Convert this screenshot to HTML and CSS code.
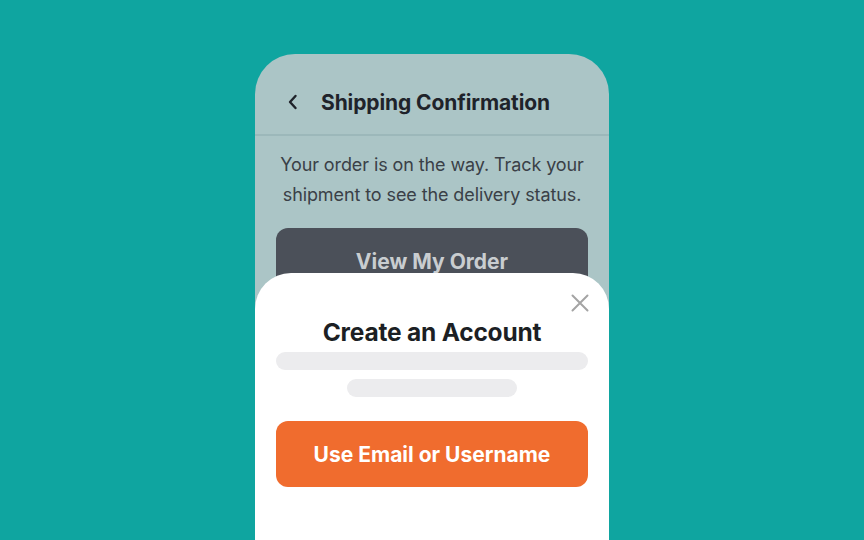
FILE: index.html
```html
<!DOCTYPE html>
<html lang="en">
<head>
    <meta charset="UTF-8">
    <meta name="viewport" content="width=device-width, initial-scale=1.0">
    <title>Shipping Confirmation</title>
    <link rel="stylesheet" href="styles.css">
</head>
<body>
    <div class="phone">
        <header class="header">
            <button class="back" aria-label="Back">
                <svg width="12" height="16" viewBox="0 0 12 16" fill="none">
                    <path d="M8.5 2 L3 8 L8.5 14" stroke="#1f232a" stroke-width="2.4" stroke-linecap="round" stroke-linejoin="round"/>
                </svg>
            </button>
            <h1>Shipping Confirmation</h1>
        </header>

        <div class="content">
            <p class="message">Your order is on the way. Track your shipment to see the delivery status.</p>
            <button class="btn btn-dark">View My Order</button>
        </div>

        <!-- Bottom sheet -->
        <div class="sheet">
            <button class="close" aria-label="Close">
                <svg width="18" height="18" viewBox="0 0 18 18" fill="none">
                    <path d="M1.5 1.5 L16.5 16.5 M16.5 1.5 L1.5 16.5" stroke="#a4a4a4" stroke-width="2" stroke-linecap="round"/>
                </svg>
            </button>
            <h2>Create an Account</h2>
            <div class="skeleton skeleton-wide"></div>
            <div class="skeleton skeleton-short"></div>
            <button class="btn btn-orange">Use Email or Username</button>
        </div>
    </div>
</body>
</html>
```

FILE: styles.css
```css
* {
    margin: 0;
    padding: 0;
    box-sizing: border-box;
}

body {
    font-family: Inter, 'Noto Sans', sans-serif;
    background: #0fa5a0;
    height: 540px;
    overflow: hidden;
    padding-top: 54px;
}

.phone {
    position: relative;
    width: 354px;
    height: 486px;
    margin: 0 auto;
    background: #abc5c6;
    border-radius: 40px 40px 0 0;
    overflow: hidden;
}

.header {
    height: 82px;
    display: flex;
    align-items: center;
    padding: 16px 0 0 32px;
    border-bottom: 2px solid #9cb8ba;
}

.back {
    background: none;
    border: none;
    width: 14px;
    height: 16px;
    display: flex;
    align-items: center;
    margin-right: 20px;
}

.header h1 {
    font-size: 21px;
    font-weight: 700;
    color: #1f232a;
    letter-spacing: -0.1px;
}

.content {
    padding: 14px 21px 0;
}

.message {
    font-size: 18px;
    line-height: 30px;
    color: #3a4047;
    text-align: center;
    letter-spacing: -0.1px;
}

.btn {
    display: block;
    width: 100%;
    height: 66px;
    border: none;
    border-radius: 12px;
    font-family: inherit;
    font-size: 21px;
    font-weight: 700;
}

.btn-dark {
    margin-top: 18px;
    background: #4b5059;
    color: #c9cdd0;
}

.sheet {
    position: absolute;
    left: 0;
    right: 0;
    top: 219px;
    bottom: 0;
    background: white;
    border-radius: 36px 36px 0 0;
    padding: 45px 21px 0;
    text-align: center;
}

.close {
    position: absolute;
    top: 21px;
    right: 20px;
    background: none;
    border: none;
    width: 18px;
    height: 18px;
}

.sheet h2 {
    font-size: 24.5px;
    line-height: 28px;
    font-weight: 700;
    color: #1c1f24;
    letter-spacing: -0.2px;
}

.skeleton {
    height: 18px;
    border-radius: 9px;
    background: #ececee;
    margin: 0 auto;
}

.skeleton-wide {
    margin-top: 6px;
    width: 100%;
}

.skeleton-short {
    margin-top: 9px;
    width: 170px;
}

.btn-orange {
    margin-top: 24px;
    background: #f06c2e;
    color: white;
}
```
